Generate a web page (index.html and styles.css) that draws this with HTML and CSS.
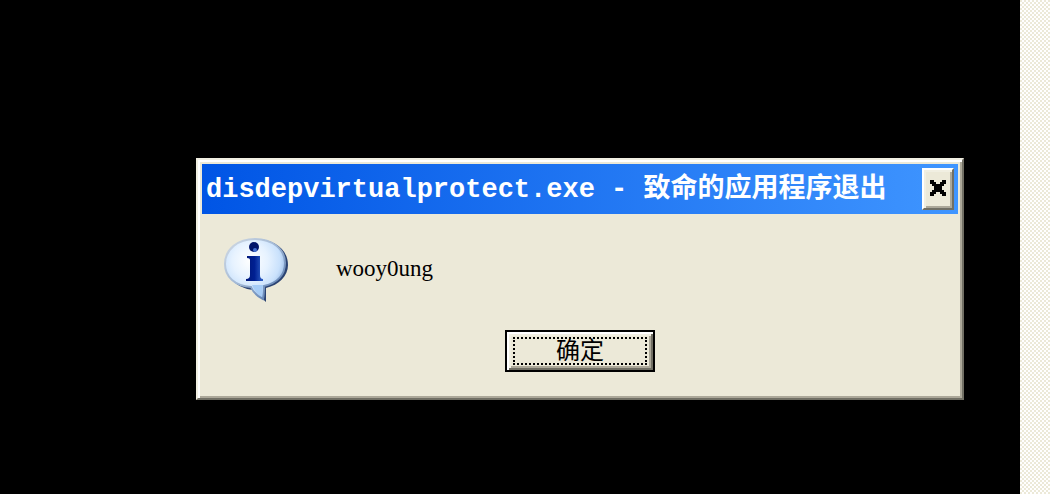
FILE: index.html
```html
<!DOCTYPE html>
<html lang="zh-CN">
<head>
<meta charset="utf-8">
<title>disdepvirtualprotect.exe</title>
<link rel="stylesheet" href="styles.css">
</head>
<body>
<main class="console">
  <section class="dialog" role="alertdialog" aria-labelledby="dialog-title" aria-describedby="dialog-message">
    <header class="titlebar">
      <h1 class="title" id="dialog-title">disdepvirtualprotect.exe - 致命的应用程序退出</h1>
      <button class="close" type="button" aria-label="关闭">
        <svg viewBox="0 0 16 16" width="16" height="16" aria-hidden="true">
          <path d="M0 0h4v2h2v2h4v-2h2v-2h4v4h-2v2h-2v4h2v2h2v4h-4v-2h-2v-2h-4v2h-2v2h-4v-4h2v-2h2v-4h-2v-2h-2z"/>
        </svg>
      </button>
    </header>
    <div class="content">
      <svg class="info" viewBox="0 0 66 66" aria-hidden="true">
        <defs>
          <radialGradient id="bubble" cx="42%" cy="36%" r="66%">
            <stop offset="0" stop-color="#ffffff"/>
            <stop offset=".45" stop-color="#e6f2ff"/>
            <stop offset=".75" stop-color="#c9e1fc"/>
            <stop offset="1" stop-color="#88acdc"/>
          </radialGradient>
          <linearGradient id="rim" x1="0" y1="0" x2="1" y2="1">
            <stop offset="0" stop-color="#d3dbe4"/>
            <stop offset=".5" stop-color="#9fb6d4"/>
            <stop offset="1" stop-color="#4a70a8"/>
          </linearGradient>
          <linearGradient id="letter" x1="0" y1="0" x2="1" y2="0">
            <stop offset="0" stop-color="#00187a"/>
            <stop offset=".5" stop-color="#002092"/>
            <stop offset="1" stop-color="#2f62c8"/>
          </linearGradient>
        </defs>
        <path d="M34 3C53 3 66 14 66 29c0 11-9 20-22 23v14L31 54C15 52 5 42 5 29 5 14 17 3 34 3z" fill="#2b4372"/>
        <path d="M33 3C50 3 63 13 63 27c0 12-8 20-21 23 0 5 0 9-1 13-6-3-10-7-12-12C13 50 3 41 3 28 3 13 16 3 33 3z" fill="url(#bubble)" stroke="url(#rim)" stroke-width="2"/>
        <path d="M30 49h11l-1 12c-5-3-8-7-10-12z" fill="#a6ccf6"/>
        <circle cx="32" cy="11" r="5" fill="#00146a"/>
        <circle cx="33" cy="14" r="2" fill="#426fd0"/>
        <path d="M25 20h13v19q0 4 3 4v2H24v-2q4 0 4-4V24q0-2-3-2z" fill="url(#letter)"/>
      </svg>
      <p class="message" id="dialog-message">wooy0ung</p>
    </div>
    <footer class="actions">
      <button class="ok" type="button"><span class="focus">确定</span></button>
    </footer>
  </section>
</main>
<aside class="track"></aside>
</body>
</html>
```
FILE: styles.css
```css
* { box-sizing: border-box; }

body {
  margin: 0;
  min-height: 100vh;
  display: flex;
  background: #000;
  color: #000;
}

.console {
  flex: 1;
  padding: 158px 56px 94px 196px;
}

.track {
  width: 30px;
  background: repeating-conic-gradient(#fff 0 25%, #ece9d8 0 50%) 0 0 / 4px 4px;
}

.dialog {
  background: #ece9d8;
  border: 2px solid;
  border-color: #f1efe2 #716f64 #716f64 #f1efe2;
  box-shadow: inset 2px 2px #fff, inset -2px -2px #aca899;
  padding: 4px;
}

.titlebar {
  display: flex;
  align-items: center;
  justify-content: space-between;
  height: 50px;
  padding: 0 4px;
  background: linear-gradient(90deg, #0055e5, #3f95ff);
}

.title {
  margin: 0;
  padding-top: 2px;
  color: #fff;
  font: bold 27px/50px "Liberation Mono", "Noto Sans CJK SC", monospace;
  white-space: nowrap;
}

.close {
  display: grid;
  place-items: center;
  width: 32px;
  height: 42px;
  padding: 0 0 2px;
  border: 2px solid;
  border-color: #fff #716f64 #716f64 #fff;
  background: #ece9d8;
  box-shadow: inset 2px 2px #f1efe2, inset -2px -2px #aca899;
}

.content {
  display: flex;
  align-items: center;
  gap: 48px;
  padding: 22px 20px 26px;
}

.info {
  width: 66px;
  height: 66px;
}

.message {
  margin: 0;
  font: 23px/28px "Liberation Serif", serif;
}

.actions {
  display: flex;
  justify-content: center;
  padding: 2px 0 22px;
}

.ok {
  width: 150px;
  height: 42px;
  padding: 4px;
  border: 2px solid #000;
  background: #ece9d8;
  box-shadow: inset 2px 2px #fff, inset -2px -2px #716f64, inset 4px 4px #f1efe2, inset -4px -4px #aca899;
  color: #000;
  font: 24px/24px "Liberation Sans", "Noto Sans CJK SC", sans-serif;
}

.focus {
  display: block;
  height: 28px;
  margin: 0 2px;
  border: 2px dotted #000;
}
```
